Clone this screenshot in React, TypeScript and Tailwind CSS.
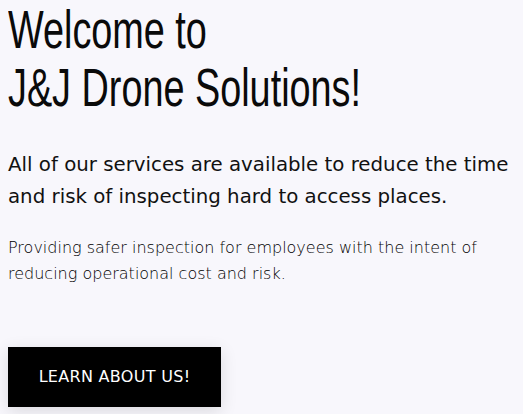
export default function App() {
  return (
    <div className="min-h-[414px] w-full bg-[#f8f7fc] px-2">
      <h1 className="origin-left scale-x-[0.7] whitespace-nowrap font-['Liberation_Sans',sans-serif] text-[54px] leading-[58px] text-[#0a0a0a]">
        Welcome to
        <br />
        J&amp;J Drone Solutions!
      </h1>
      <p className="mt-[33px] font-['DejaVu_Sans',sans-serif] text-[19.8px] leading-[32px] text-[#111]">
        All of our services are available to reduce the time and risk of inspecting hard to access places.
      </p>
      <p className="mt-[22px] max-w-[490px] font-['DejaVu_Sans',sans-serif] text-[16px] font-extralight leading-[26px] text-black">
        Providing safer inspection for employees with the intent of reducing operational cost and risk.
      </p>
      <button className="mt-[60px] flex h-[60px] w-[213px] items-center justify-center bg-black font-['DejaVu_Sans',sans-serif] text-[16px] tracking-[0.3px] text-white shadow-[0_4px_16px_rgba(0,0,0,0.12)]">
        LEARN ABOUT US!
      </button>
    </div>
  );
}
